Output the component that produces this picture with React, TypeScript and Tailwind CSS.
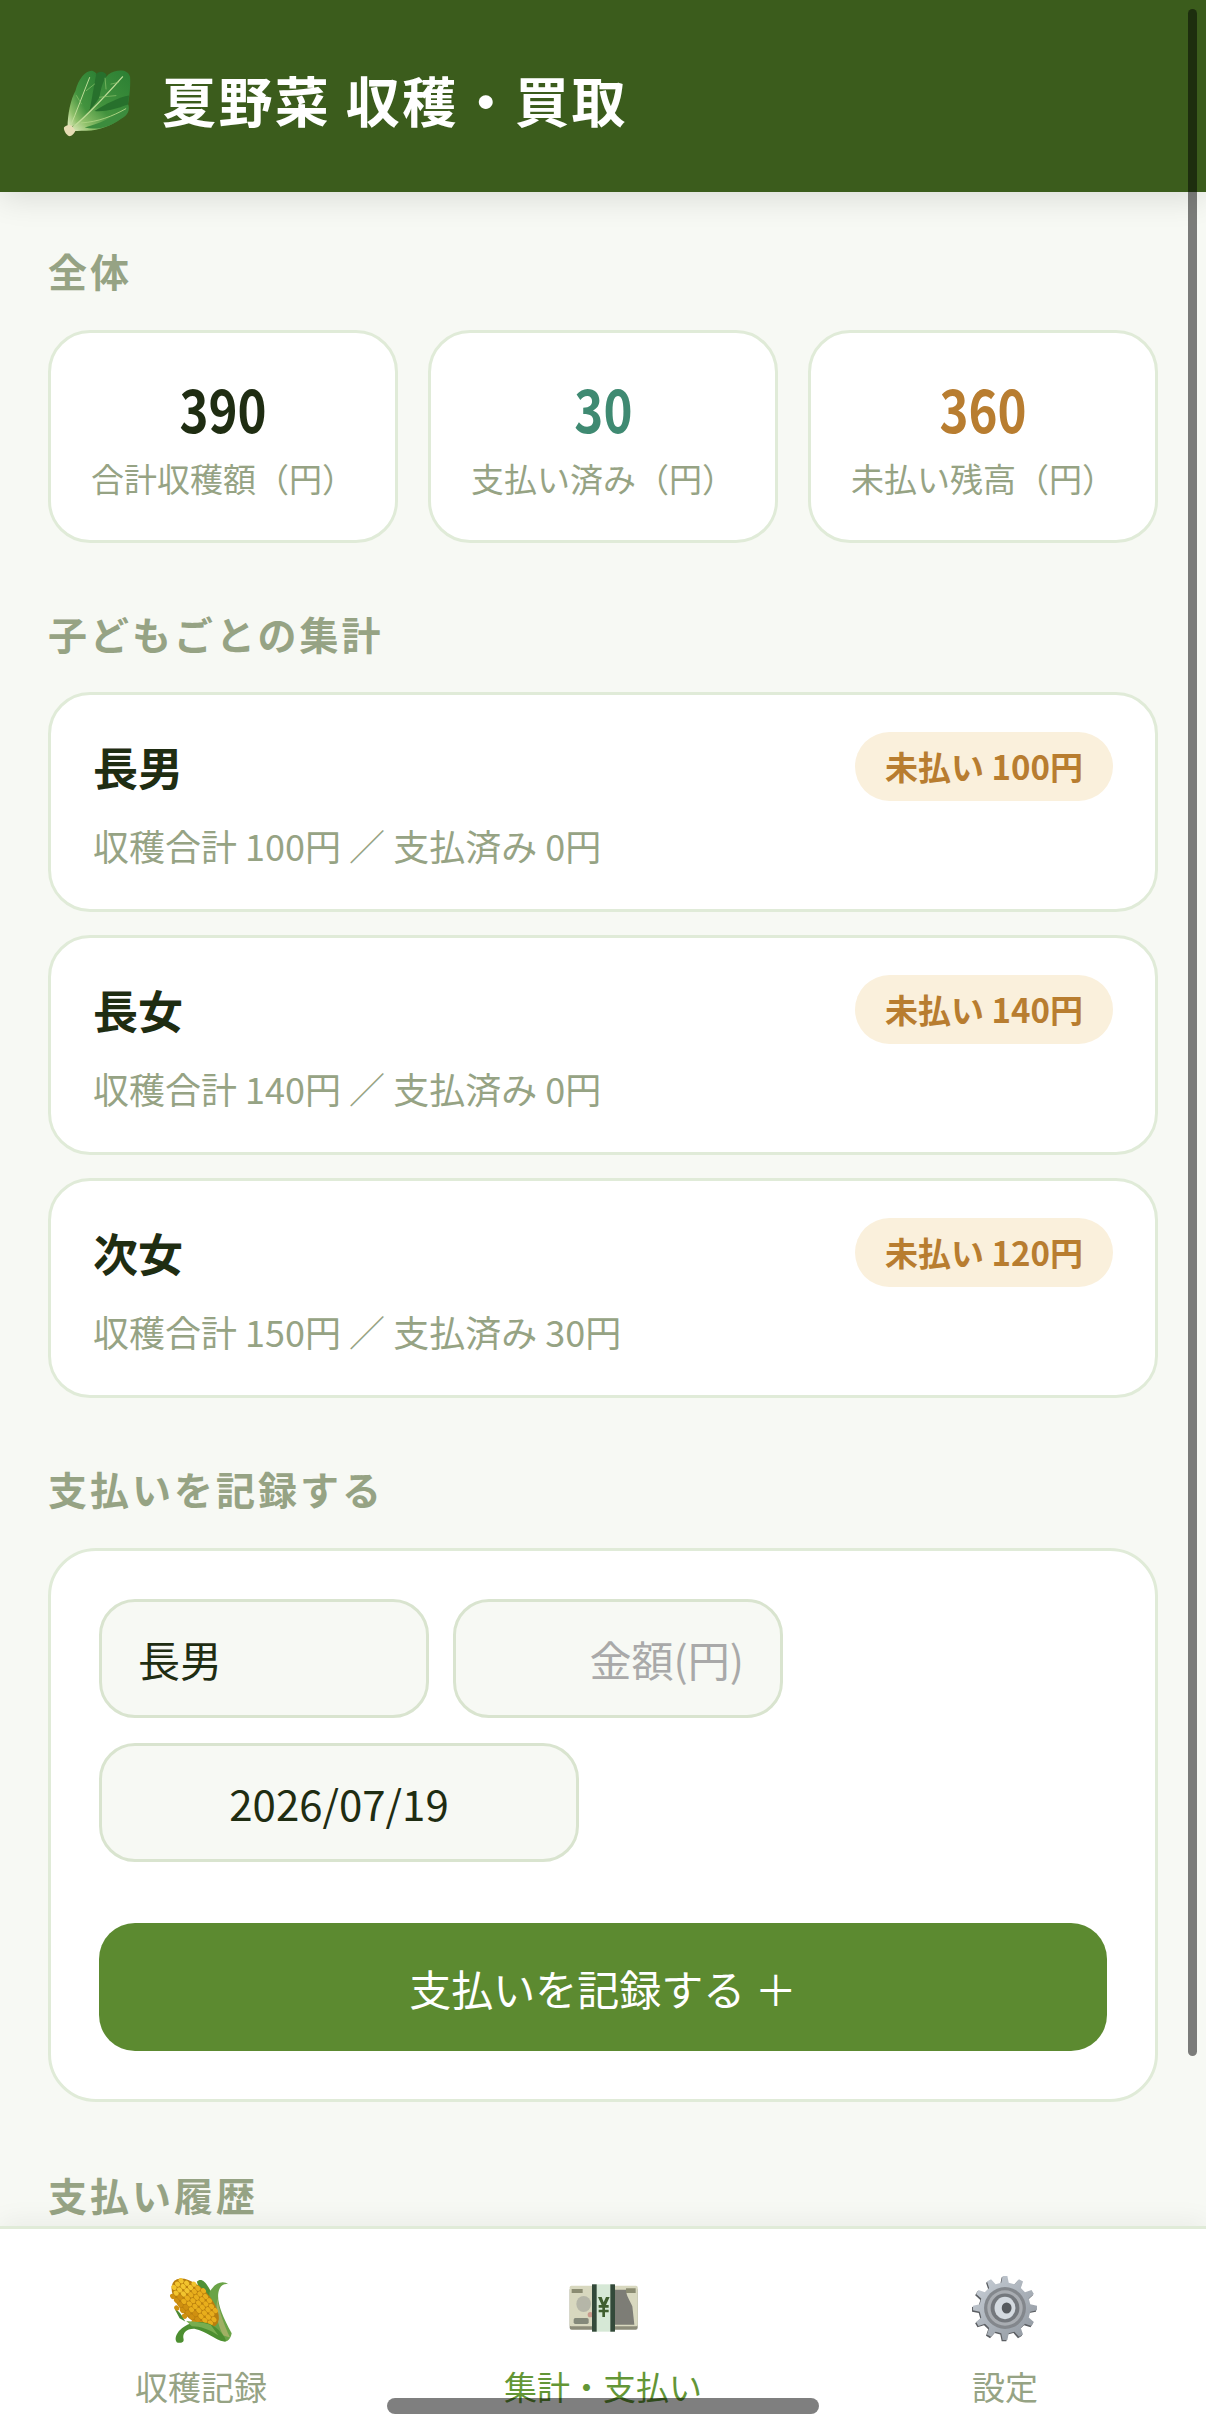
import { useId } from "react";

const sans = "font-['Noto_Sans_CJK_JP','Noto_Sans',sans-serif]";

const stats = [
  { value: "390", label: "合計収穫額（円）", color: "text-[#1f2d12]" },
  { value: "30", label: "支払い済み（円）", color: "text-[#3f8a72]" },
  { value: "360", label: "未払い残高（円）", color: "text-[#b87d30]" },
];

const kids = [
  { name: "長男", unpaid: 100, total: 100, paid: 0 },
  { name: "長女", unpaid: 140, total: 140, paid: 0 },
  { name: "次女", unpaid: 120, total: 150, paid: 30 },
];

function Lettuce() {
  const id = useId();
  return (
    <svg viewBox="85 75 225 225" className="w-[74px] h-[74px] shrink-0 mt-[8px]">
      <defs>
        <linearGradient id={id + "a"} x1="0" y1="1" x2="1" y2="0">
          <stop offset="0" stopColor="#e6eec4" />
          <stop offset="0.2" stopColor="#8fc06a" />
          <stop offset="0.45" stopColor="#43933e" />
          <stop offset="1" stopColor="#2b7f33" />
        </linearGradient>
      </defs>
      <path d="M108 262C108 220 118 175 132 150C142 112 165 86 185 90C205 96 205 130 200 165L150 250Z" fill={`url(#${id}a)`} />
      <path d="M195 100C205 88 220 92 225 100L240 190L170 240Z" fill="#27702c" />
      <path d="M112 270C150 235 185 205 205 170C212 130 222 98 250 92C270 86 292 88 298 108C300 135 296 170 292 190C296 205 290 222 270 235C245 255 205 272 165 272C145 272 128 274 112 270Z" fill={`url(#${id}a)`} />
      <path d="M160 262C200 250 250 235 292 192C298 210 292 224 270 236C240 258 200 272 160 262Z" fill="#3c8c3d" />
      <path d="M190 212C225 190 265 170 295 165L292 192C255 205 225 215 190 212Z" fill="#27702c" />
      <path d="M115 268C160 235 215 175 275 108" stroke="#bfdc98" strokeWidth="4" fill="none" strokeLinecap="round" />
      <path d="M115 262C135 215 155 160 175 110" stroke="#bfdc98" strokeWidth="3" fill="none" strokeLinecap="round" />
      <path d="M150 248C200 245 245 228 285 205" stroke="#a9d080" strokeWidth="3" fill="none" strokeLinecap="round" />
      <path d="M225 145L222 112M240 130L262 125M205 170L255 165M150 190L135 165M165 150L190 130" stroke="#8fc56e" strokeWidth="2" fill="none" strokeLinecap="round" />
      <path d="M97 262C102 256 112 252 120 256L132 272C128 282 118 290 112 288C104 284 96 272 97 262Z" fill="#e6dcb4" />
    </svg>
  );
}

function Corn() {
  const kernels: { x: number; y: number; c: string }[] = [];
  for (let r = 0; r < 10; r++) {
    const half = [1, 2, 2.5, 3, 3, 3, 2.5, 2.5, 2, 1][r];
    for (let k = -half; k <= half; k += 1) {
      const t = (k + (r % 2 ? 0.5 : 0)) * 14.5;
      kernels.push({ x: -78 + r * 17, y: t, c: k > 1 ? "#cf9010" : r < 3 ? "#f2c42e" : "#e8ae1c" });
    }
  }
  return (
    <svg viewBox="50 25 205 225" className="w-[68px] h-[75px] -mt-[2px]">
      <path d="M140 60C150 48 165 55 180 85L195 110L160 120Z" fill="#4f9034" />
      <path d="M178 92C190 68 215 52 236 68C222 64 208 72 205 92C200 120 215 160 245 215C240 240 225 245 215 235C190 210 175 170 178 92Z" fill="#6aa347" />
      <path d="M202 110C206 145 222 190 240 228L220 222C202 190 195 150 202 110Z" fill="#a0b064" />
      <path d="M72 140C90 150 100 170 105 180L88 170Z" fill="#4c8a34" />
      <g transform="translate(135 124) rotate(47)">
        <ellipse cx="0" cy="0" rx="92" ry="46" fill="#b97f0e" />
        {kernels.map((k, i) => (
          <ellipse key={i} cx={k.x} cy={k.y} rx="8.5" ry="6.8" fill={k.c} />
        ))}
      </g>
      <path d="M80 243C66 225 92 190 135 182C170 177 200 192 222 225C228 235 230 242 222 240C195 235 165 207 135 202C110 200 95 215 100 233C102 242 92 246 80 243Z" fill="#4d8f31" />
      <path d="M108 178C130 180 160 182 182 190L205 222C180 204 150 194 125 194Z" fill="#78ad50" />
    </svg>
  );
}

function YenBills() {
  return (
    <svg viewBox="45 65 225 160" className="w-[75px] h-[54px]">
      <rect x="56" y="84" width="204" height="126" rx="6" fill="#8d8d7a" />
      <rect x="56" y="78" width="204" height="122" rx="5" fill="#d8d8bf" />
      <ellipse cx="98" cy="133" rx="22" ry="24" fill="#b5b6a8" />
      <path d="M190 90H225C226 110 236 120 244 140L250 195H190Z" fill="#7d7d76" />
      <path d="M62 88H95V100H62ZM225 86H254V100H225Z" fill="#8b8c72" />
      <rect x="68" y="175" width="45" height="18" rx="5" fill="#84897a" />
      <circle cx="118" cy="165" r="8" fill="#c99a8c" />
      <rect x="125" y="74" width="65" height="142" fill="#d6e8d6" />
      <rect x="123" y="74" width="14" height="142" fill="#33493a" />
      <rect x="178" y="74" width="14" height="142" fill="#33493a" />
      <path d="M141 112H152L158 128L165 112H176L165 136H173V144H162V150H173V158H162V172H154V158H143V150H154V144H143V136H152Z" fill="#3f5e2e" />
    </svg>
  );
}

function Gear() {
  const id = useId();
  const pts: string[] = [];
  const teeth = 12;
  for (let i = 0; i < teeth; i++) {
    const a = (i / teeth) * Math.PI * 2;
    const s = (Math.PI * 2) / teeth;
    const p = (r: number, o: number) => `${(165 + Math.cos(a + o * s) * r).toFixed(1)} ${(145 + Math.sin(a + o * s) * r).toFixed(1)}`;
    pts.push(p(78, -0.28), p(98, -0.14), p(98, 0.14), p(78, 0.28));
  }
  return (
    <svg viewBox="55 35 220 220" className="w-[72px] h-[72px]">
      <defs>
        <linearGradient id={id + "g"} x1="0" y1="0" x2="1" y2="1">
          <stop offset="0" stopColor="#c9d0d8" />
          <stop offset="1" stopColor="#8e959d" />
        </linearGradient>
      </defs>
      <polygon points={pts.join(" ")} fill="#5c5f63" transform="translate(-3 4)" />
      <polygon points={pts.join(" ")} fill={`url(#${id}g)`} />
      <circle cx="165" cy="145" r="64" fill="#83878c" />
      <circle cx="165" cy="145" r="54" fill="#a9adb2" />
      <circle cx="165" cy="145" r="44" fill="#74787d" />
      <ellipse cx="165" cy="145" rx="32" ry="34" fill="#d4dae0" />
      <ellipse cx="170" cy="145" rx="15" ry="17" fill="#565a5e" />
    </svg>
  );
}

function SectionLabel({ children }: { children: string }) {
  return <h2 className="h-[54px] leading-[54px] text-[39px] font-bold tracking-[3px] text-[#96a384] mb-[33px]">{children}</h2>;
}

export default function App() {
  return (
    <div className={`${sans} relative w-[1206px] h-[2436px] overflow-hidden flex flex-col bg-[#f7f9f4]`}>
      <header className="relative z-10 h-[192px] shrink-0 bg-[#3b5c1c] shadow-[0_6px_30px_rgba(0,0,0,0.12)] flex items-center gap-[28px] pl-[60px] pt-[6px]">
        <Lettuce />
        <h1 className="text-[54px] font-bold tracking-[2.4px] text-white">夏野菜 収穫・買取</h1>
      </header>

      <main className="flex-1 overflow-hidden px-[48px] pt-[51px]">
        <SectionLabel>全体</SectionLabel>
        <div className="grid grid-cols-3 gap-[30px]">
          {stats.map((s) => (
            <div key={s.label} className="h-[213px] rounded-[42px] border-[3px] border-[#e0ebd8] bg-white pt-[41px] text-center">
              <div className={`leading-[66px] text-[60px] font-bold ${s.color}`}>
                <span className="inline-block scale-x-[0.82]">{s.value}</span>
              </div>
              <div className="mt-[16px] leading-[44px] text-[33px] text-[#96a384]">{s.label}</div>
            </div>
          ))}
        </div>

        <div className="mt-[63px]">
          <SectionLabel>子どもごとの集計</SectionLabel>
          <div className="flex flex-col gap-[23px] -mt-[1px]">
            {kids.map((k) => (
              <div key={k.name} className="h-[220px] rounded-[42px] border-[3px] border-[#e0ebd8] bg-white px-[42px] pt-[37px]">
                <div className="flex items-center justify-between">
                  <span className="text-[45px] font-bold text-[#1f2d12]">{k.name}</span>
                  <span className="h-[69px] leading-[69px] rounded-full bg-[#faf0dc] px-[30px] text-[33px] font-bold text-[#b87d30]">未払い {k.unpaid}円</span>
                </div>
                <p className="mt-[17px] leading-[54px] text-[36px] text-[#96a384]">
                  収穫合計 {k.total}円 ／ 支払済み {k.paid}円
                </p>
              </div>
            ))}
          </div>
        </div>

        <div className="mt-[63px]">
          <SectionLabel>支払いを記録する</SectionLabel>
          <div className="rounded-[48px] border-[3px] border-[#e0ebd8] bg-white p-[48px]">
            <div className="flex flex-wrap gap-x-[24px] gap-y-[25px]">
              <select className="w-[330px] h-[119px] appearance-none rounded-[36px] border-[3px] border-[#d9e4cf] bg-[#f7f9f4] px-[36px] text-[42px] text-[#1f2d12] outline-none">
                {kids.map((k) => (
                  <option key={k.name}>{k.name}</option>
                ))}
              </select>
              <input placeholder="金額(円)" className="w-[330px] h-[119px] rounded-[36px] border-[3px] border-[#d9e4cf] bg-[#f7f9f4] px-[36px] text-right text-[42px] outline-none placeholder:text-[#a9a9a9]" />
              <input readOnly value="2026/07/19" className="w-[480px] h-[119px] rounded-[36px] border-[3px] border-[#d9e4cf] bg-[#f7f9f4] text-center text-[42px] text-[#1f2d12] outline-none" />
            </div>
            <button className="mt-[61px] w-full h-[128px] rounded-[36px] bg-[#5c8a30] text-[42px] text-white">支払いを記録する ＋</button>
          </div>
        </div>

        <div className="mt-[65px]">
          <SectionLabel>支払い履歴</SectionLabel>
        </div>
      </main>

      <nav className="relative z-10 h-[210px] shrink-0 border-t-[3px] border-[#e0ebd8] bg-white shadow-[0_-6px_24px_rgba(0,0,0,0.05)] grid grid-cols-3 pt-[39px]">
        <div className="flex flex-col items-center">
          <div className="h-[80px] flex items-center justify-center"><Corn /></div>
          <span className="mt-[14px] leading-[48px] text-[33px] text-[#96a384]">収穫記録</span>
        </div>
        <div className="flex flex-col items-center">
          <div className="h-[80px] flex items-center justify-center"><YenBills /></div>
          <span className="mt-[14px] leading-[48px] text-[33px] text-[#639636]">集計・支払い</span>
        </div>
        <div className="flex flex-col items-center">
          <div className="h-[80px] flex items-center justify-center"><Gear /></div>
          <span className="mt-[14px] leading-[48px] text-[33px] text-[#96a384]">設定</span>
        </div>
      </nav>

      <div className="absolute z-20 right-[9px] top-[9px] w-[9px] h-[2047px] rounded-full bg-black/50" />
      <div className="absolute z-20 left-[387px] top-[2398px] w-[432px] h-[16px] rounded-full bg-black/50" />
    </div>
  );
}
